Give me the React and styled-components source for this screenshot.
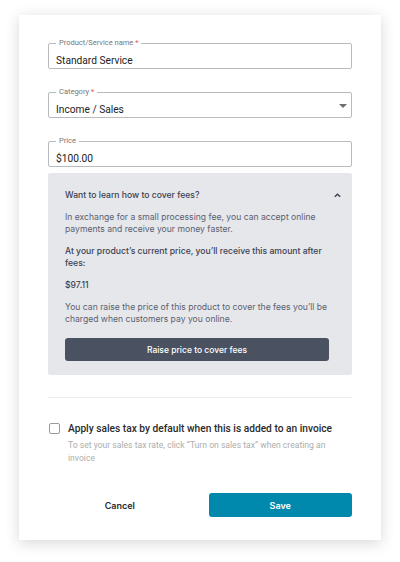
import React, { useState } from 'react';
import styled, { createGlobalStyle } from 'styled-components';

const GlobalStyle = createGlobalStyle`
  html, body {
    margin: 0;
    padding: 0;
    background: #fff;
    font-family: Roboto, "Liberation Sans", sans-serif;
  }
  * { box-sizing: border-box; }
`;

const Page = styled.div`
  padding: 15px 19px 22px;
`;

const Card = styled.div`
  width: 362px;
  height: 525px;
  background: #fff;
  box-shadow: 0 3px 14px rgba(0, 0, 0, 0.16);
  padding: 28px 29px 23px;
  display: flex;
  flex-direction: column;
`;

const Fields = styled.div`
  display: flex;
  flex-direction: column;
  gap: 23px;
`;

const Field = styled.div`
  position: relative;
  height: 26px;
  border: 1px solid #b9bcbf;
  border-radius: 2px;
  display: flex;
  align-items: center;
  padding: 8px 7px 0;
  font-size: 10.2px;
  color: #222;
`;

const Label = styled.span`
  position: absolute;
  top: -6px;
  left: 7px;
  padding: 0 3px;
  background: #fff;
  font-size: 7.5px;
  line-height: 10px;
  color: #777;
`;

const Star = styled.span`
  color: #e8543e;
`;

const Caret = styled.span`
  position: absolute;
  right: 4px;
  top: 11px;
  width: 0;
  height: 0;
  border-left: 4px solid transparent;
  border-right: 4px solid transparent;
  border-top: 4px solid #6e6e6e;
`;

const Panel = styled.div`
  margin-top: 6px;
  background: #e6e7eb;
  border-radius: 2px;
  padding: 16px 23px 14px 17px;
  font-family: Inter, Roboto, sans-serif;
  color: #5a6170;
  font-size: 8.6px;
  line-height: 12px;
`;

const PanelHead = styled.div`
  display: flex;
  justify-content: space-between;
  align-items: center;
  font-size: 8.6px;
  font-weight: 500;
  color: #3b4150;
  margin-bottom: 10px;
`;

const Chevron = styled.svg`
  width: 9px;
  height: 9px;
  margin-right: -13px;
`;

const Para = styled.p`
  margin: 0 0 10px;
  color: ${p => (p.$strong ? '#3b4150' : '#5a6170')};
  font-weight: ${p => (p.$strong ? 500 : 400)};
`;

const DarkButton = styled.button`
  display: block;
  width: 264px;
  height: 23px;
  margin-top: 13px;
  border: none;
  border-radius: 3px;
  background: #4a5262;
  color: #fff;
  font-family: Inter, Roboto, sans-serif;
  font-size: 8.5px;
  font-weight: 500;
`;

const Divider = styled.hr`
  margin: 22px 0 0;
  border: none;
  border-top: 1px solid #ececec;
`;

const CheckRow = styled.label`
  display: flex;
  align-items: center;
  gap: 8px;
  margin-top: 25px;
  font-size: 10.2px;
  font-weight: 500;
  color: #2a2a2a;
`;

const Box = styled.input`
  appearance: none;
  margin: 0 0 0 1px;
  width: 11px;
  height: 11px;
  border: 1.5px solid #9a9a9a;
  border-radius: 2px;
  background: #fff;
  &:checked { background: #0089ad; border-color: #0089ad; }
`;

const Help = styled.p`
  margin: 5px 0 0 20px;
  font-size: 8.6px;
  line-height: 13px;
  color: #adadad;
`;

const Actions = styled.div`
  margin-top: auto;
  display: grid;
  grid-template-columns: 1fr 1fr;
  gap: 17px;
`;

const ActionButton = styled.button`
  height: 24px;
  border: none;
  border-radius: 3px;
  background: ${p => (p.$primary ? '#0089ad' : 'transparent')};
  color: ${p => (p.$primary ? '#fff' : '#2a2a2a')};
  font-family: Inter, Roboto, sans-serif;
  font-size: 9px;
  font-weight: 600;
`;

export default function App() {
  const [tax, setTax] = useState(false);

  return (
    <Page>
      <GlobalStyle />
      <Card>
        <Fields>
          <Field>
            <Label>Product/Service name <Star>*</Star></Label>
            Standard Service
          </Field>
          <Field>
            <Label>Category <Star>*</Star></Label>
            Income / Sales
            <Caret />
          </Field>
          <Field>
            <Label>Price</Label>
            $100.00
          </Field>
        </Fields>
        <Panel>
          <PanelHead>
            Want to learn how to cover fees?
            <Chevron viewBox="0 0 10 10">
              <path d="M2 6.5 L5 3.5 L8 6.5" fill="none" stroke="#3b4150" strokeWidth="1.5" />
            </Chevron>
          </PanelHead>
          <Para>
            In exchange for a small processing fee, you can accept online payments and receive your money faster.
          </Para>
          <Para $strong>
            At your product’s current price, you’ll receive this amount after fees:
          </Para>
          <Para $strong>$97.11</Para>
          <Para>
            You can raise the price of this product to cover the fees you’ll be charged when customers pay you online.
          </Para>
          <DarkButton>Raise price to cover fees</DarkButton>
        </Panel>
        <Divider />
        <CheckRow>
          <Box type="checkbox" checked={tax} onChange={e => setTax(e.target.checked)} />
          Apply sales tax by default when this is added to an invoice
        </CheckRow>
        <Help>To set your sales tax rate, click “Turn on sales tax” when creating an invoice</Help>
        <Actions>
          <ActionButton>Cancel</ActionButton>
          <ActionButton $primary>Save</ActionButton>
        </Actions>
      </Card>
    </Page>
  );
}
